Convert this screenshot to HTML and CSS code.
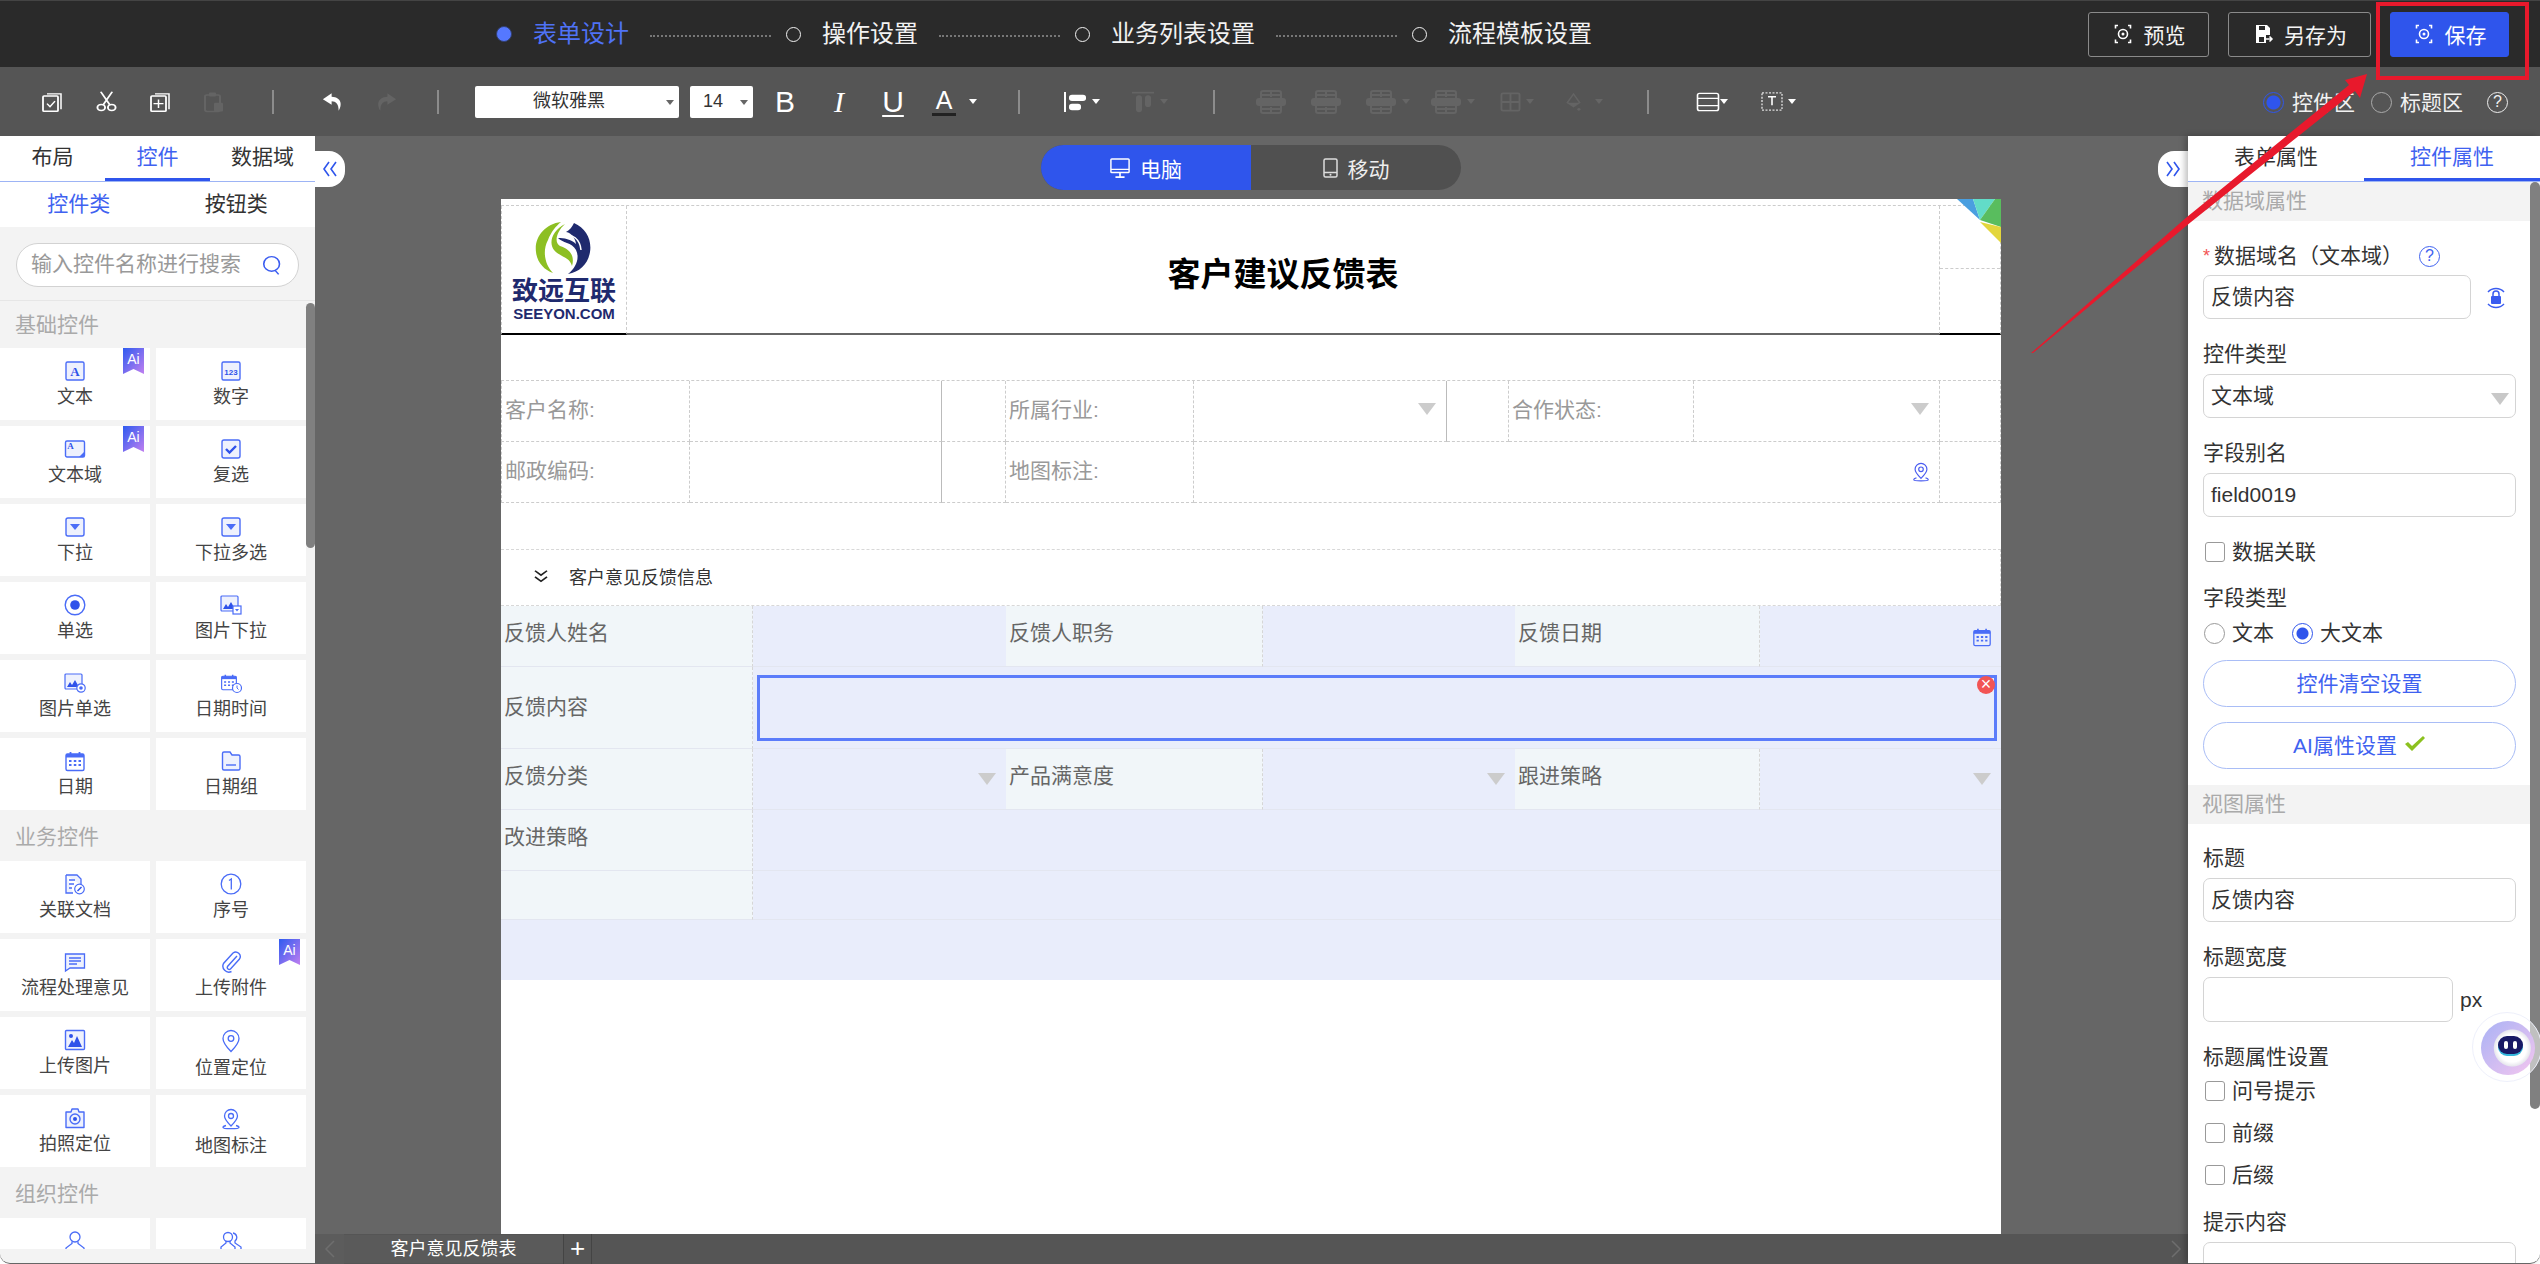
FILE: index.html
```html
<!DOCTYPE html>
<html lang="zh-CN">
<head>
    <meta charset="UTF-8">
    <title>表单设计</title>
    <link rel="stylesheet" href="styles.css">
</head>
<body>
<svg class="defs" width="0" height="0">
    <symbol id="i-pin" viewBox="0 0 22 22"><path d="M11 1.5a6.5 6.5 0 0 0-6.5 6.5c0 3.5 3.5 7 6.5 10 3-3 6.500-6.500 6.500-10A6.500 6.500 0 0 0 11 1.500z" fill="none" stroke="currentColor" stroke-width="1.300"/><circle cx="11" cy="8" r="2.500" fill="none" stroke="currentColor" stroke-width="1.300"/><path d="M6 17.500c-2 .5-3 1-3 2 0 .8 3 1.200 8 1.200s8-.4 8-1.200c0-1-1-1.500-3-2" fill="none" stroke="currentColor" stroke-width="1.300"/></symbol>
    <symbol id="i-cal" viewBox="0 0 22 22"><rect x="2" y="4" width="18" height="16.500" rx="1.500" fill="none" stroke="currentColor" stroke-width="1.400"/><path d="M2 4h18v3.500H2z" fill="currentColor"/><path d="M6.500 2v4M15.500 2v4" stroke="currentColor" stroke-width="1.800"/><path d="M5 10h2.500v2H5zM9.800 10h2.500v2H9.800zM14.500 10h2.500v2h-2.500zM5 14h2.500v2H5zM9.800 14h2.500v2H9.800zM14.500 14h2.500v2h-2.500z" fill="currentColor"/></symbol>
    <symbol id="i-drop" viewBox="0 0 22 22"><rect x="2" y="2" width="18" height="18" rx="2" fill="#eef1fd" stroke="currentColor" stroke-width="1.400"/><path d="M6 8h10l-5 6z" fill="currentColor"/></symbol>
    <symbol id="i-frame" viewBox="0 0 22 22"><path d="M6 2.500H3.500v3M16 2.500h2.500v3M6 19.500H3.500v-3M16 19.500h2.500v-3" fill="none" stroke="currentColor" stroke-width="1.600"/><circle cx="11" cy="11" r="4.500" fill="none" stroke="currentColor" stroke-width="1.600"/><circle cx="11" cy="11" r="1.500" fill="currentColor"/></symbol>
    <symbol id="i-ai" viewBox="0 0 21 26"><defs><linearGradient id="ai-fill" x1="0" y1="0" x2="1" y2="1"><stop offset="0" stop-color="#2e5bf0"/><stop offset="1" stop-color="#c07ff0"/></linearGradient></defs><path d="M0 0h21v26l-10.500-5L0 26z" fill="url(#ai-fill)"/></symbol>
    <symbol id="i-table" viewBox="0 0 32 24" preserveAspectRatio="none"><rect x="6" y="1" width="20" height="22" rx="2" fill="none" stroke="currentColor" stroke-width="2"/><rect x="1" y="8" width="30" height="8" rx="3" fill="currentColor"/><path d="M6 5h20M6 19h20M16 1v6M16 17v6" stroke="currentColor" stroke-width="2"/></symbol>
</svg>

<div class="app">
    <header class="topbar">
        <div class="steps">
            <span class="step-dot"></span><span class="step-name active">表单设计</span>
            <span class="step-line"></span>
            <span class="step-ring"></span><span class="step-name">操作设置</span>
            <span class="step-line"></span>
            <span class="step-ring"></span><span class="step-name">业务列表设置</span>
            <span class="step-line"></span>
            <span class="step-ring"></span><span class="step-name">流程模板设置</span>
        </div>
        <div class="actions">
            <button class="top-btn btn-preview"><svg class="top-icon"><use href="#i-frame"/></svg>预览</button>
            <button class="top-btn btn-saveas"><svg class="top-icon" viewBox="0 0 22 22"><path d="M4 2h11l3 3v7h-4v8H4z" fill="#fff"/><path d="M7 3h6v4H7z" fill="#2a2a2a"/><path d="M7 14h5v5H7z" fill="#2a2a2a"/><path d="M14 16h6M17.500 13.500 20 16l-2.500 2.500" fill="none" stroke="#fff" stroke-width="1.500"/></svg>另存为</button>
            <button class="top-btn btn-save"><svg class="top-icon"><use href="#i-frame"/></svg>保存</button>
        </div>
    </header>

    <div class="toolbar">
        <span class="tool"><svg width="22" height="22" viewBox="0 0 22 26" preserveAspectRatio="none"><path d="M6 3.500h14v18" fill="none" stroke="#fff" stroke-width="1.500"/><rect x="2" y="6" width="15" height="18" rx="1" fill="none" stroke="#fff" stroke-width="1.800"/><path d="M6 15l3 3.500 5-6.500" fill="none" stroke="#fff" stroke-width="1.500"/></svg></span>
        <span class="tool"><svg width="21" height="21" viewBox="0 0 22 28" preserveAspectRatio="none"><circle cx="5.500" cy="22" r="4" fill="none" stroke="#fff" stroke-width="2"/><circle cx="16.500" cy="22" r="4" fill="none" stroke="#fff" stroke-width="2"/><path d="M7.500 18.500 17 1M14.500 18.500 5 1" stroke="#fff" stroke-width="2"/></svg></span>
        <span class="tool"><svg width="22" height="22" viewBox="0 0 22 26" preserveAspectRatio="none"><path d="M6 3.500h14v18" fill="none" stroke="#fff" stroke-width="1.500"/><rect x="2" y="6" width="15" height="18" rx="1" fill="none" stroke="#fff" stroke-width="1.800"/><path d="M9.500 10v10M4.500 15h10" stroke="#fff" stroke-width="1.500"/></svg></span>
        <span class="tool off"><svg width="22" height="22" viewBox="0 0 22 28" preserveAspectRatio="none"><rect x="2" y="5" width="15" height="21" rx="2" fill="none" stroke="currentColor" stroke-width="2"/><rect x="6" y="2" width="7" height="5" rx="1" fill="currentColor"/><rect x="11" y="15" width="9" height="11" rx="1" fill="currentColor"/></svg></span>
        <span class="sep"></span>
        <span class="tool"><svg width="21" height="20" viewBox="0 0 24 30" preserveAspectRatio="none"><path d="M11 2 1 11l10 8v-5c5 0 8 4 8 14 4-8 4-20-8-21z" fill="#fff"/></svg></span>
        <span class="tool off"><svg width="21" height="20" viewBox="0 0 24 30" preserveAspectRatio="none"><path d="M13 2l10 9-10 8v-5c-5 0-8 4-8 14-4-8-4-20 8-21z" fill="currentColor"/></svg></span>
        <span class="sep"></span>
        <span class="select font-select">微软雅黑<i class="mini-caret dark"></i></span>
        <span class="select size-select">14<i class="mini-caret dark"></i></span>
        <span class="tool glyph">B</span>
        <span class="tool glyph ital-i">I</span>
        <span class="tool glyph under-u">U</span>
        <span class="caret-tool wide"><span class="color-a">A</span><i class="mini-caret"></i></span>
        <span class="sep"></span>
        <span class="caret-tool"><svg width="24" height="22" viewBox="0 0 24 24" preserveAspectRatio="none"><path d="M2 1v22" stroke="#fff" stroke-width="2"/><rect x="6" y="4" width="17" height="7" rx="3" fill="#fff"/><rect x="6" y="14" width="12" height="7" rx="3" fill="#fff"/></svg><i class="mini-caret"></i></span>
        <span class="caret-tool off"><svg width="24" height="22" viewBox="0 0 24 26" preserveAspectRatio="none"><path d="M1 2h22" stroke="currentColor" stroke-width="2"/><rect x="5" y="5" width="6" height="20" rx="3" fill="currentColor"/><rect x="14" y="5" width="6" height="14" rx="3" fill="currentColor"/></svg><i class="mini-caret"></i></span>
        <span class="sep"></span>
        <span class="tool off"><svg width="32" height="24"><use href="#i-table"/></svg></span>
        <span class="tool off"><svg width="32" height="24"><use href="#i-table"/></svg></span>
        <span class="caret-tool off"><svg width="32" height="24"><use href="#i-table"/></svg><i class="mini-caret"></i></span>
        <span class="caret-tool off"><svg width="32" height="24"><use href="#i-table"/></svg><i class="mini-caret"></i></span>
        <span class="caret-tool off"><svg width="21" height="20" viewBox="0 0 22 22" preserveAspectRatio="none"><rect x="1.500" y="1.500" width="19" height="19" rx="1.500" fill="none" stroke="currentColor" stroke-width="2"/><path d="M1.500 11h19M11 1.500v19" stroke="currentColor" stroke-width="2"/></svg><i class="mini-caret"></i></span>
        <span class="caret-tool wide off"><svg width="17" height="20" viewBox="0 0 22 30" preserveAspectRatio="none"><path d="M11 3 3 16l8 6 8-6z" fill="none" stroke="currentColor" stroke-width="2"/><path d="M3 16h16l-8 6z" fill="currentColor"/><circle cx="18" cy="26" r="2" fill="currentColor"/></svg><i class="mini-caret"></i></span>
        <span class="sep"></span>
        <span class="caret-tool tight"><svg width="24" height="20" viewBox="0 0 24 22" preserveAspectRatio="none"><rect x="1.500" y="1.500" width="21" height="19" rx="2" fill="none" stroke="#fff" stroke-width="1.600"/><path d="M1.500 7h21M1.500 15h21" stroke="#fff" stroke-width="1.600"/></svg><i class="mini-caret"></i></span>
        <span class="caret-tool"><svg width="22" height="19" viewBox="0 0 22 20" preserveAspectRatio="none"><rect x="1" y="1" width="20" height="18" fill="none" stroke="#ddd" stroke-width="1.400" stroke-dasharray="2 1.500"/><path d="M7 5h8M11 5v9" stroke="#fff" stroke-width="1.600"/></svg><i class="mini-caret"></i></span>
        <div class="zone-switch">
            <span class="zone-radio on"></span><span class="zone-name">控件区</span>
            <span class="zone-radio"></span><span class="zone-name">标题区</span>
            <span class="zone-help">?</span>
        </div>
    </div>

    <div class="main">
        <aside class="left-panel">
            <div class="tabs tabs-three">
                <span class="tab">布局</span>
                <span class="tab current">控件</span>
                <span class="tab">数据域</span>
            </div>
            <div class="subtabs">
                <span class="subtab current">控件类</span>
                <span class="subtab">按钮类</span>
            </div>
            <div class="search-wrap">
                <div class="search-box">
                    <span class="search-hint">输入控件名称进行搜索</span>
                    <svg width="21" height="21" viewBox="0 0 24 26" preserveAspectRatio="none"><circle cx="11" cy="11" r="9" fill="none" stroke="#3a5cf0" stroke-width="1.800"/><path d="M15 19l4 5" stroke="#3a5cf0" stroke-width="1.800"/></svg>
                </div>
            </div>
            <div class="control-list">
                <div class="group-title first">基础控件</div>
                <div class="control-grid">
                    <div class="control"><svg width="22" height="22" viewBox="0 0 22 22"><rect x="2" y="2" width="18" height="18" rx="1.500" fill="#eef1fd" stroke="currentColor" stroke-width="1.400"/><text x="11" y="16" class="svg-a">A</text></svg><span>文本</span><svg class="ai-tag"><use href="#i-ai"/></svg><b class="ai-text">Ai</b></div>
                    <div class="control"><svg width="22" height="22" viewBox="0 0 22 22"><rect x="2" y="2" width="18" height="18" rx="1.500" fill="#eef1fd" stroke="currentColor" stroke-width="1.400"/><text x="11" y="14.500" class="svg-num">123</text></svg><span>数字</span></div>
                    <div class="control"><svg width="22" height="22" viewBox="0 0 22 22"><rect x="1.500" y="3" width="19" height="16" rx="1.500" fill="#eef1fd" stroke="currentColor" stroke-width="1.400"/><text x="6.500" y="11" class="svg-a small">A</text><path d="M20 14v5h-5z" fill="currentColor"/></svg><span>文本域</span><svg class="ai-tag"><use href="#i-ai"/></svg><b class="ai-text">Ai</b></div>
                    <div class="control"><svg width="22" height="22" viewBox="0 0 22 22"><rect x="2" y="2" width="18" height="18" rx="2" fill="#eef1fd" stroke="currentColor" stroke-width="1.400"/><path d="M6 11l3.500 3.500L16 8" fill="none" stroke="#2f52ea" stroke-width="2.400"/></svg><span>复选</span></div>
                    <div class="control"><svg width="22" height="22"><use href="#i-drop"/></svg><span>下拉</span></div>
                    <div class="control"><svg width="22" height="22"><use href="#i-drop"/></svg><span>下拉多选</span></div>
                    <div class="control"><svg width="22" height="22" viewBox="0 0 22 22"><circle cx="11" cy="11" r="9.800" fill="none" stroke="currentColor" stroke-width="1.400"/><circle cx="11" cy="11" r="4.800" fill="#2f52ea"/></svg><span>单选</span></div>
                    <div class="control"><svg width="22" height="22" viewBox="0 0 22 22"><rect x="1" y="2" width="17" height="15" rx="1" fill="#eef1fd" stroke="currentColor" stroke-width="1.200"/><path d="M3 15l3-5 2 3 3-5 4 7z" fill="#2f52ea"/><rect x="13" y="12" width="8" height="8" fill="#fff" stroke="currentColor" stroke-width="1.200"/><path d="M15 15h4l-2 2.500z" fill="currentColor"/></svg><span>图片下拉</span></div>
                    <div class="control"><svg width="22" height="22" viewBox="0 0 22 22"><rect x="1" y="2" width="17" height="15" rx="1" fill="#eef1fd" stroke="currentColor" stroke-width="1.200"/><path d="M3 15l3-5 2 3 3-5 4 7z" fill="#2f52ea"/><circle cx="17" cy="16" r="4.200" fill="#fff" stroke="currentColor" stroke-width="1.200"/><circle cx="17" cy="16" r="1.800" fill="currentColor"/></svg><span>图片单选</span></div>
                    <div class="control"><svg width="22" height="22" viewBox="0 0 22 22"><use href="#i-cal" width="18" height="20" x="0" y="0"/><circle cx="17" cy="16" r="4.500" fill="#fff" stroke="currentColor" stroke-width="1.200"/><path d="M17 13.500V16l1.500 1.500" fill="none" stroke="currentColor"/></svg><span>日期时间</span></div>
                    <div class="control"><svg width="22" height="22"><use href="#i-cal"/></svg><span>日期</span></div>
                    <div class="control"><svg width="22" height="22" viewBox="0 0 22 22"><path d="M2.500 3.500a1.500 1.500 0 0 1 1.500-1.500h6l2 3h6.500a1.500 1.500 0 0 1 1.500 1.500v12a1.500 1.500 0 0 1-1.500 1.500H4a1.500 1.500 0 0 1-1.500-1.500z" fill="#eef1fd" stroke="currentColor" stroke-width="1.400"/><path d="M6 15h10" stroke="currentColor" stroke-width="1.400"/></svg><span>日期组</span></div>
                </div>
                <div class="group-title">业务控件</div>
                <div class="control-grid">
                    <div class="control"><svg width="22" height="22" viewBox="0 0 22 22"><path d="M2 2h11l4 4v6M9 20H2V2" fill="#eef1fd" stroke="currentColor" stroke-width="1.300"/><path d="M5 7h6M5 11h5M5 15h3" stroke="currentColor" stroke-width="1.300"/><circle cx="15.500" cy="16" r="4.800" fill="#fff" stroke="currentColor" stroke-width="1.200"/><path d="M13.500 18l4-4" stroke="#2f52ea" stroke-width="1.500"/></svg><span>关联文档</span></div>
                    <div class="control"><svg width="22" height="22" viewBox="0 0 22 22"><circle cx="11" cy="11" r="9.800" fill="none" stroke="currentColor" stroke-width="1.300"/><path d="M9 7.500l2.300-1.500v10.500" fill="none" stroke="currentColor" stroke-width="1.300"/></svg><span>序号</span></div>
                    <div class="control"><svg width="22" height="22" viewBox="0 0 22 22"><path d="M1.500 3h19v14H6l-4.500 3z" fill="#eef1fd" stroke="currentColor" stroke-width="1.300"/><path d="M5 7h12M5 10h12M5 13h8" stroke="currentColor" stroke-width="1.300"/></svg><span>流程处理意见</span></div>
                    <div class="control"><svg width="22" height="22" viewBox="0 0 22 22"><path d="M17 5l-9.500 10.500a2 2 0 0 0 3 2.500L19.500 8a4.500 4.500 0 0 0-6.500-6L3.500 12.500a6 6 0 0 0 8 8" fill="none" stroke="currentColor" stroke-width="1.400"/></svg><span>上传附件</span><svg class="ai-tag"><use href="#i-ai"/></svg><b class="ai-text">Ai</b></div>
                    <div class="control"><svg width="22" height="22" viewBox="0 0 22 22"><rect x="1.500" y="1.500" width="19" height="19" rx="1" fill="#eef1fd" stroke="currentColor" stroke-width="1.400"/><circle cx="7" cy="7" r="2" fill="#2f52ea"/><path d="M4 18l4-7 2 3 3-7 5 11z" fill="#2f52ea"/></svg><span>上传图片</span></div>
                    <div class="control"><svg width="22" height="24" viewBox="0 0 22 24"><path d="M11 1.500a8 8 0 0 0-8 8c0 4 4 9 8 13 4-4 8-9 8-13a8 8 0 0 0-8-8z" fill="none" stroke="currentColor" stroke-width="1.300"/><circle cx="11" cy="9.500" r="2.800" fill="none" stroke="currentColor" stroke-width="1.300"/></svg><span>位置定位</span></div>
                    <div class="control"><svg width="22" height="22" viewBox="0 0 22 22"><path d="M2 5h5l1-3h6l1 3h5v15.500H2z" fill="#eef1fd" stroke="currentColor" stroke-width="1.400" stroke-linejoin="round"/><circle cx="11" cy="12" r="5" fill="none" stroke="currentColor" stroke-width="1.400"/><circle cx="11" cy="12" r="2" fill="#2f52ea"/></svg><span>拍照定位</span></div>
                    <div class="control"><svg width="22" height="24"><use href="#i-pin"/></svg><span>地图标注</span></div>
                </div>
                <div class="group-title">组织控件</div>
                <div class="control-grid">
                    <div class="control"><svg width="22" height="22" viewBox="0 0 22 22"><circle cx="11" cy="7" r="5" fill="none" stroke="currentColor" stroke-width="1.300"/><path d="M8 11.500v2L2 18v3h18v-3l-6-4.500v-2" fill="none" stroke="currentColor" stroke-width="1.300"/></svg></div>
                    <div class="control"><svg width="22" height="22" viewBox="0 0 22 22"><circle cx="8" cy="7" r="4.500" fill="none" stroke="currentColor" stroke-width="1.300"/><path d="M6 11v2l-5 4v4h14v-4l-5-4v-2M13 3a4.500 4.500 0 0 1 2 8v2l6 4v4h-4" fill="none" stroke="currentColor" stroke-width="1.300"/></svg></div>
                </div>
            </div>
            <div class="panel-foot"></div>
            <span class="scroll-thumb left-thumb"></span>
        </aside>

        <section class="canvas">
            <div class="device-switch">
                <span class="device current"><svg width="20" height="20" viewBox="0 0 22 22"><rect x="1" y="1" width="20" height="15" rx="1" fill="none" stroke="#fff" stroke-width="1.600"/><path d="M1 12.500h20" stroke="#fff" stroke-width="1.600"/><path d="M11 16v5M6 21h10" stroke="#fff" stroke-width="1.800"/></svg>电脑</span>
                <span class="device"><svg width="15" height="20" viewBox="0 0 15 20"><rect x="1" y="1" width="13" height="18" rx="1.500" fill="none" stroke="#ddd" stroke-width="1.500"/><path d="M1 14.500h13" stroke="#ddd" stroke-width="1.500"/><circle cx="7.500" cy="16.800" r="1" fill="#ddd"/></svg>移动</span>
            </div>
            <div class="sheet-area">
                <div class="sheet">
                    <svg class="sheet-corner" width="44" height="44" viewBox="0 0 44 44"><path d="M0 0h16l7 21z" fill="#4a9fe0"/><path d="M16 0h22L23 21z" fill="#62dcc8"/><path d="M38 0h6v28l-21-7z" fill="#59bd5e"/><path d="M23 23l21 5v16z" fill="#e3d63c"/></svg>
                    <div class="sheet-head">
                        <div class="logo-cell">
                            <svg width="60" height="56" viewBox="0 0 60 56"><path d="M27 2C11 4 0 17 2 32c1 10 8 18 17 21C11 45 8 31 14 20 17 12 22 6 27 2z" fill="#8dbf23"/><path d="M31 4C19 10 14 22 20 30c6 7 16 7 18 16 3-10-2-17-12-20-6-3-4-14 5-22z" fill="#8dbf23"/><path d="M40 3c12 5 18 17 16 29-2 12-10 20-22 22 8-6 12-16 8-24-4-8-14-7-18-12 6 0 13 1 18 6-1-8-7-12-10-12 4-2 6-5 8-9z" fill="#1f2a6e"/><path d="M30 16c8-3 16 3 17 14" fill="none" stroke="#fff" stroke-width="1.500"/></svg>
                            <span class="logo-cn">致远互联</span>
                            <span class="logo-en">SEEYON.COM</span>
                        </div>
                        <div class="title-cell">客户建议反馈表</div>
                        <div class="head-side">
                            <span></span>
                            <span></span>
                        </div>
                    </div>

                    <div class="meta-grid">
                        <div class="meta-cell label">客户名称:</div>
                        <div class="meta-cell solid-right"></div>
                        <div class="meta-cell"></div>
                        <div class="meta-cell label">所属行业:</div>
                        <div class="meta-cell solid-right"><i class="tri"></i></div>
                        <div class="meta-cell"></div>
                        <div class="meta-cell label">合作状态:</div>
                        <div class="meta-cell"><i class="tri"></i></div>
                        <div class="meta-cell"></div>

                        <div class="meta-cell label">邮政编码:</div>
                        <div class="meta-cell solid-right"></div>
                        <div class="meta-cell"></div>
                        <div class="meta-cell label">地图标注:</div>
                        <div class="meta-cell span-map"><svg class="map-icon" width="20" height="20"><use href="#i-pin"/></svg></div>
                        <div class="meta-cell"></div>
                    </div>

                    <div class="group-head">
                        <svg width="16" height="14" viewBox="0 0 16 16" preserveAspectRatio="none"><path d="M2 2l6 5 6-5M2 9l6 5 6-5" fill="none" stroke="#222" stroke-width="1.800"/></svg>
                        <span>客户意见反馈信息</span>
                    </div>

                    <div class="data-grid">
                        <div class="data-cell name">反馈人姓名</div>
                        <div class="data-cell"></div>
                        <div class="data-cell name">反馈人职务</div>
                        <div class="data-cell"></div>
                        <div class="data-cell name">反馈日期</div>
                        <div class="data-cell"><svg class="cal-icon" width="20" height="20"><use href="#i-cal"/></svg></div>

                        <div class="data-cell name tall">反馈内容</div>
                        <div class="data-cell span-five">
                            <div class="picked"><span class="picked-close">×</span></div>
                        </div>

                        <div class="data-cell name">反馈分类</div>
                        <div class="data-cell"><i class="tri"></i></div>
                        <div class="data-cell name">产品满意度</div>
                        <div class="data-cell"><i class="tri"></i></div>
                        <div class="data-cell name">跟进策略</div>
                        <div class="data-cell"><i class="tri"></i></div>

                        <div class="data-cell name">改进策略</div>
                        <div class="data-cell span-five"></div>

                        <div class="data-cell name"></div>
                        <div class="data-cell span-five"></div>

                        <div class="data-cell span-all"></div>
                    </div>
                </div>
            </div>
            <div class="sheet-tabs">
                <span class="sheet-prev"><svg width="12" height="20" viewBox="0 0 12 20"><path d="M10 2 2 10l8 8" fill="none" stroke="#6e6e6e" stroke-width="1.500"/></svg></span>
                <span class="sheet-tab">客户意见反馈表</span>
                <span class="sheet-add">+</span>
                <span class="sheet-next"><svg width="12" height="20" viewBox="0 0 12 20"><path d="M2 2l8 8-8 8" fill="none" stroke="#6e6e6e" stroke-width="1.500"/></svg></span>
            </div>
            <span class="collapse left-collapse"><svg width="16" height="16" viewBox="0 0 16 16"><path d="M7 1 2 8l5 7M14 1 9 8l5 7" fill="none" stroke="#2f55ec" stroke-width="1.600"/></svg></span>
            <span class="collapse right-collapse"><svg width="16" height="16" viewBox="0 0 16 16"><path d="M2 1l5 7-5 7M9 1l5 7-5 7" fill="none" stroke="#2f55ec" stroke-width="1.600"/></svg></span>
        </section>

        <aside class="right-panel">
            <div class="tabs tabs-two">
                <span class="tab">表单属性</span>
                <span class="tab current">控件属性</span>
            </div>
            <div class="prop-section">数据域属性</div>
            <div class="prop-body">
                <div class="prop-label"><em>*</em>数据域名（文本域）<span class="help-ring">?</span></div>
                <div class="prop-inline">
                    <div class="prop-input name-input">反馈内容</div>
                    <svg width="24" height="24" viewBox="0 0 24 24"><path d="M4 6a11 11 0 0 1 16 0M20 18a11 11 0 0 1-16 0" fill="none" stroke="#3a5cf0" stroke-width="1.500"/><rect x="7" y="10" width="10" height="8" rx="1" fill="#3a5cf0"/><path d="M9 10V8a3 3 0 0 1 6 0v2" fill="none" stroke="#3a5cf0" stroke-width="1.500"/></svg>
                </div>
                <div class="prop-label">控件类型</div>
                <div class="prop-input">文本域<i class="tri"></i></div>
                <div class="prop-label">字段别名</div>
                <div class="prop-input">field0019</div>
                <label class="prop-check check-first"><span class="box"></span>数据关联</label>
                <div class="prop-label">字段类型</div>
                <div class="radio-row">
                    <span class="radio"></span><span class="radio-text">文本</span>
                    <span class="radio on"></span><span class="radio-text">大文本</span>
                </div>
                <div class="pill">控件清空设置</div>
                <div class="pill">AI属性设置<svg width="22" height="18" viewBox="0 0 22 18"><path d="M1 9l3-2 4 4L19 1l2 2L8 16z" fill="#8cc11f"/></svg></div>
            </div>
            <div class="prop-section lower">视图属性</div>
            <div class="prop-body">
                <div class="prop-label">标题</div>
                <div class="prop-input">反馈内容</div>
                <div class="prop-label">标题宽度</div>
                <div class="prop-inline">
                    <div class="prop-input width-input"></div>
                    <span class="unit">px</span>
                </div>
                <div class="prop-label">标题属性设置</div>
                <label class="prop-check check-tight"><span class="box"></span>问号提示</label>
                <label class="prop-check"><span class="box"></span>前缀</label>
                <label class="prop-check"><span class="box"></span>后缀</label>
                <div class="prop-label">提示内容</div>
                <div class="prop-input"></div>
            </div>
            <span class="scroll-thumb right-thumb"></span>
        </aside>
    </div>

    <div class="helper-bot">
        <span class="bot-face"><i></i><i></i></span>
    </div>

    <div class="mark-box"></div>
    <svg class="mark-arrow" width="2540" height="1264" viewBox="0 0 2540 1264"><path d="M2031 353 2187 217 2349 85 2345 80 2367 74 2360 98 2355 91 2191 222 2033 353z" fill="#e8192c"/></svg>
</div>
</body>
</html>
```

FILE: styles.css
```css
* {
    box-sizing: border-box;
}

html, body {
    margin: 0;
    padding: 0;
    height: 100%;
    overflow: hidden;
}

body {
    font-family: "Liberation Sans", "Noto Sans CJK SC", sans-serif;
    font-size: 21px;
    color: #333;
}

.defs {
    position: absolute;
}

i, em {
    font-style: normal;
}

.app {
    position: relative;
    width: 2540px;
    height: 1264px;
    display: flex;
    flex-direction: column;
    color: #3f62f0;
}

/* top bar */
.topbar {
    height: 67px;
    flex: none;
    background-color: #2a2a2a;
    border-top: 1px solid #444;
    display: flex;
    align-items: center;
    justify-content: space-between;
}

.steps {
    display: flex;
    align-items: center;
    padding-left: 496px;
    color: #fff;
    font-size: 24px;
}

.step-dot {
    width: 16px;
    height: 16px;
    border-radius: 50%;
    background-color: #5578ff;
    border: 1px solid #33406f;
    margin-right: 21px;
}

.step-name {
    line-height: 30px;
    color: #f2f2f2;
}

.step-name.active {
    color: #4f72f5;
}

.step-line {
    width: 121px;
    border-top: 2px dotted #777;
    margin: 4px 15px 0 21px;
}

.step-ring {
    width: 15px;
    height: 15px;
    border: 1.5px solid #f2f2f2;
    border-radius: 50%;
    margin-right: 21px;
}

.actions {
    display: flex;
    gap: 19px;
    padding-right: 31px;
}

.top-btn {
    height: 45px;
    display: flex;
    align-items: center;
    justify-content: center;
    gap: 10px;
    font: inherit;
    font-size: 21px;
    color: #f4f4f4;
    background: none;
    border: 1px solid #8a8a8a;
    border-radius: 3px;
    padding: 0;
}

.btn-preview { width: 121px; }
.btn-saveas { width: 143px; }
.btn-save {
    width: 119px;
    background-color: #2f55ec;
    border-color: #2f55ec;
    color: #fff;
}

.top-icon {
    width: 22px;
    height: 22px;
    color: #fff;
}

/* toolbar */
.toolbar {
    height: 69px;
    flex: none;
    background-color: #555;
    padding-left: 25px;
    display: grid;
    grid-template-columns: 54px 54px 54px 54px 64px 54px 54px 50px 216px 79px 54px 54px 54px 69px 60px 65px 71px 58px 56px 53px 70px 61px 68px 65px 64px 64px 69px 1fr;
    align-items: center;
    justify-items: center;
    color: #fff;
}

.tool, .caret-tool {
    display: flex;
    align-items: center;
    justify-content: center;
}

.caret-tool { gap: 5px; }
.caret-tool.wide { gap: 13px; }
.caret-tool.tight { gap: 0; }

.off { color: #646464; }
.off .mini-caret { border-top-color: #666; }

.sep {
    width: 2px;
    height: 24px;
    background-color: #8c8c8c;
}

.select {
    height: 32px;
    background-color: #fff;
    border-radius: 2px;
    color: #333;
    font-size: 18px;
    line-height: 30px;
    position: relative;
}

.font-select {
    width: 204px;
    justify-self: end;
    text-align: center;
    padding-right: 16px;
}

.size-select {
    width: 63px;
    justify-self: start;
    margin-left: 11px;
    padding-left: 13px;
}

.select .mini-caret {
    position: absolute;
    right: 5px;
    top: 14px;
}

.mini-caret {
    width: 0;
    height: 0;
    border-left: 4px solid transparent;
    border-right: 4px solid transparent;
    border-top: 5px solid #fff;
}

.mini-caret.dark { border-top-color: #666; }

.glyph {
    font-size: 30px;
    line-height: 34px;
    color: #fff;
}

.ital-i { font-style: italic; font-family: "Liberation Serif", serif; }
.under-u { text-decoration: underline; text-underline-offset: 3px; text-decoration-thickness: 2px; }

.color-a {
    font-size: 25px;
    line-height: 26px;
    color: #fff;
    border-bottom: 3px solid #222;
    width: 24px;
    text-align: center;
}

.zone-switch {
    justify-self: end;
    display: flex;
    align-items: center;
    padding: 2px 32px 0 0;
    color: #f2f2f2;
}

.zone-radio {
    width: 21px;
    height: 21px;
    border: 1.5px solid #aaa;
    border-radius: 50%;
    margin-right: 8px;
}

.zone-radio.on {
    border-color: #2f55ec;
    background: radial-gradient(circle, #2f55ec 0 6.5px, transparent 7.5px);
}

.zone-name {
    width: 63px;
    margin-right: 16px;
    line-height: 26px;
    white-space: nowrap;
}

.zone-name + .zone-radio + .zone-name {
    margin-right: 24px;
}

.zone-help {
    width: 21px;
    height: 21px;
    border: 1.5px solid #eee;
    border-radius: 50%;
    text-align: center;
    font-size: 16px;
    line-height: 18px;
}

/* main area */
.main {
    flex: 1;
    display: flex;
    min-height: 0;
}

.left-panel {
    width: 315px;
    flex: none;
    background-color: #f3f3f3;
    position: relative;
    display: flex;
    flex-direction: column;
    border-bottom-left-radius: 10px;
    overflow: hidden;
    border-bottom: 1px solid #666;
}

.tabs {
    height: 46px;
    flex: none;
    display: grid;
    background-color: #fff;
    border-bottom: 1px solid #9db4f5;
}

.tabs-three { grid-template-columns: repeat(3, 1fr); }
.tabs-two { grid-template-columns: repeat(2, 1fr); }

.tab {
    text-align: center;
    line-height: 42px;
    color: #333;
    white-space: nowrap;
}

.tab.current {
    color: #3f62f0;
    border-bottom: 3px solid #2f55ec;
    height: 45px;
}

.subtabs {
    height: 45px;
    flex: none;
    display: grid;
    grid-template-columns: 1fr 1fr;
    background-color: #fff;
}

.subtab {
    text-align: center;
    line-height: 44px;
    color: #333;
}

.subtab.current { color: #3f62f0; }

.search-wrap {
    height: 74px;
    flex: none;
    padding: 16px 16px 0;
    border-bottom: 1px solid #e6e6e6;
}

.search-box {
    height: 44px;
    background-color: #fff;
    border: 1px solid #d2d2d2;
    border-radius: 22px;
    display: flex;
    align-items: center;
    justify-content: space-between;
    padding: 0 15px 0 14px;
}

.search-hint {
    color: #999;
    line-height: 38px;
    padding-bottom: 2px;
    white-space: nowrap;
}

.control-list {
    flex: 1;
    min-height: 0;
    overflow: hidden;
    padding-right: 9px;
}

.panel-foot {
    height: 14px;
    flex: none;
}

.group-title {
    height: 51px;
    line-height: 53px;
    padding-left: 15px;
    color: #aaa;
}

.group-title.first {
    height: 47px;
    line-height: 48px;
}

.control-grid {
    display: grid;
    grid-template-columns: 150px 150px;
    grid-auto-rows: 72px;
    gap: 6px;
}

.control {
    position: relative;
    background-color: #fff;
    display: flex;
    flex-direction: column;
    align-items: center;
    padding-top: 12px;
    color: #4a6cf7;
    font-size: 18px;
}

.control > svg:first-child {
    flex: none;
}

.control > span {
    margin-top: 4px;
    line-height: 22px;
    color: #444;
    white-space: nowrap;
}

.ai-tag {
    position: absolute;
    top: 0;
    right: 6px;
    width: 21px;
    height: 26px;
}

.ai-text {
    position: absolute;
    top: 3px;
    right: 7px;
    width: 19px;
    text-align: center;
    color: #fff;
    font-size: 14px;
    font-weight: normal;
    line-height: 16px;
}

.svg-a {
    font-family: "Liberation Serif", serif;
    font-size: 13px;
    font-weight: bold;
    fill: #2f52ea;
    text-anchor: middle;
}

.svg-a.small { font-size: 9px; }

.svg-num {
    font-family: "Liberation Sans", sans-serif;
    font-size: 8px;
    font-weight: bold;
    fill: #2f52ea;
    text-anchor: middle;
}

.scroll-thumb {
    position: absolute;
    background-color: #808080;
    border-radius: 5px;
}

.left-thumb {
    left: 306px;
    top: 167px;
    width: 9px;
    height: 245px;
}

.right-thumb {
    right: 0;
    top: 46px;
    width: 10px;
    height: 927px;
}

/* canvas */
.canvas {
    flex: 1;
    min-width: 0;
    background-color: #666;
    position: relative;
    display: flex;
    flex-direction: column;
}

.device-switch {
    align-self: center;
    flex: none;
    margin: 9px 1px 9px 0;
    width: 420px;
    height: 45px;
    border-radius: 23px;
    overflow: hidden;
    display: grid;
    grid-template-columns: 210px 210px;
    background-color: #505050;
}

.device {
    display: flex;
    align-items: center;
    justify-content: center;
    gap: 10px;
    color: #eee;
    font-size: 21px;
}

.device.current {
    background-color: #2f55ec;
    color: #fff;
}

.sheet-area {
    flex: 1;
    min-height: 0;
    display: flex;
    justify-content: center;
    overflow: hidden;
}

.sheet {
    width: 1500px;
    margin-right: 1px;
    background-color: #fff;
    padding-top: 6px;
    position: relative;
    height: 100%;
}

.sheet-corner {
    position: absolute;
    top: 0;
    right: 0;
}

.sheet-head {
    display: grid;
    grid-template-columns: 126px 1312px 62px;
    height: 130px;
    border-top: 1px dashed #ccc;
}

.logo-cell {
    border-left: 1px dashed #ccc;
    border-right: 1px dashed #ccc;
    border-bottom: 2px solid #000;
    display: flex;
    flex-direction: column;
    align-items: center;
    padding-top: 14px;
}

.logo-cn {
    font-size: 26px;
    line-height: 30px;
    font-weight: bold;
    color: #1f2a6e;
    white-space: nowrap;
}

.logo-en {
    font-size: 15px;
    line-height: 17px;
    margin-top: -1px;
    font-weight: bold;
    color: #1f2a6e;
    white-space: nowrap;
}

.title-cell {
    border-bottom: 2px solid #666;
    display: flex;
    align-items: center;
    justify-content: center;
    padding-top: 4px;
    font-size: 33px;
    font-weight: bold;
    color: #000;
}

.head-side {
    display: grid;
    grid-template-rows: 63px 1fr;
    border-left: 1px dashed #ccc;
    border-right: 1px dashed #ccc;
    border-bottom: 2px solid #000;
}

.head-side span:first-child {
    border-bottom: 1px dashed #ccc;
}

.meta-grid {
    margin-top: 45px;
    display: grid;
    grid-template-columns: 189px 252px 64px 188px 253px 62px 185px 246px 61px;
    grid-auto-rows: 61px;
    border-top: 1px dashed #ccc;
}

.meta-cell {
    position: relative;
    border-bottom: 1px dashed #ccc;
    border-right: 1px dashed #ccc;
    display: flex;
    align-items: center;
}

.meta-cell:first-child,
.meta-cell:nth-child(10) {
    border-left: 1px dashed #ccc;
}

.meta-cell.label {
    color: #999;
    padding-left: 3px;
    padding-bottom: 7px;
}

.solid-right {
    border-right: 1px solid #bbb;
}

.span-map {
    grid-column: span 4;
}

.tri {
    position: absolute;
    right: 10px;
    top: 22px;
    width: 0;
    height: 0;
    border-left: 9px solid transparent;
    border-right: 9px solid transparent;
    border-top: 12px solid #ccc;
}

.map-icon {
    position: absolute;
    right: 8px;
    top: 20px;
    color: #4a5cf0;
}

.group-head {
    margin-top: 46px;
    height: 57px;
    display: flex;
    align-items: center;
    gap: 20px;
    padding: 0 0 4px 32px;
    font-size: 18px;
    color: #333;
    border-top: 1px dashed #d8d8d8;
    border-bottom: 1px dashed #d8d8d8;
    border-right: 1px dashed #d8d8d8;
}

.data-grid {
    display: grid;
    grid-template-columns: 252px 253px 257px 252px 245px 241px;
    grid-template-rows: 61px 82px 61px 61px 49px 60px;
    background-color: #e9edfb;
}

.data-cell {
    position: relative;
    background-color: #e9edfb;
    border-bottom: 1px solid #e3e6f0;
}

.data-cell.name {
    background-color: #f1f6f9;
    border-right: 1px dashed #d6d6d6;
    color: #666;
    padding: 13px 0 0 3px;
    line-height: 28px;
}

.data-cell.name.tall {
    padding-top: 26px;
}

.data-cell .tri {
    right: 10px;
    top: 24px;
}

.cal-icon {
    position: absolute;
    right: 9px;
    top: 21px;
    color: #4a6cf7;
}

.span-five { grid-column: span 5; }
.span-all {
    grid-column: 1 / -1;
    border-bottom: 0;
}

.picked {
    position: relative;
    height: 66px;
    margin: 8px 4px;
    border: 3px solid #5b7cfa;
}

.picked-close {
    position: absolute;
    top: -2px;
    right: -1px;
    width: 18px;
    height: 18px;
    border-radius: 50%;
    background-color: #f25454;
    color: #fff;
    font-size: 18px;
    line-height: 17px;
    text-align: center;
}

.sheet-tabs {
    height: 30px;
    flex: none;
    background-color: #555;
    display: flex;
    align-items: center;
    position: relative;
    color: #fff;
}

.sheet-prev {
    width: 29px;
    height: 100%;
    background-color: #5c5c5c;
    display: flex;
    align-items: center;
    justify-content: center;
}

.sheet-tab {
    width: 219px;
    text-align: center;
    font-size: 18px;
    line-height: 28px;
    background-color: #5a5a5a;
}

.sheet-add {
    width: 29px;
    height: 100%;
    border-left: 1px solid #444;
    border-right: 1px solid #444;
    text-align: center;
    font-size: 26px;
    line-height: 28px;
}

.sheet-next {
    margin-left: auto;
    margin-right: 6px;
    display: flex;
}

.collapse {
    position: absolute;
    top: 15px;
    width: 30px;
    height: 36px;
    background-color: #fff;
    display: flex;
    align-items: center;
    justify-content: center;
}

.left-collapse {
    left: 0;
    border-radius: 0 16px 16px 0;
}

.right-collapse {
    right: 0;
    border-radius: 16px 0 0 16px;
}

/* right panel */
.right-panel {
    width: 352px;
    flex: none;
    background-color: #fff;
    position: relative;
    overflow: hidden;
    border-bottom-right-radius: 10px;
    border-bottom: 1px solid #666;
    box-shadow: -3px 0 6px rgba(0, 0, 0, 0.25);
}

.prop-section {
    height: 39px;
    background-color: #f3f3f3;
    color: #aaa;
    line-height: 38px;
    padding-left: 14px;
}

.prop-section.lower {
    margin-top: 16px;
}

.prop-body {
    padding: 0 24px 0 15px;
    color: #333;
}

.prop-label {
    margin-top: 23px;
    line-height: 24px;
    display: flex;
    align-items: center;
    white-space: nowrap;
}

.lower + .prop-body > .prop-label:first-child,
.prop-check + .prop-label {
    margin-top: 22px;
}

.prop-check + .prop-check + .prop-check + .prop-label {
    margin-top: 23px;
}

.prop-label em {
    color: #f25454;
    margin-right: 4px;
    font-size: 18px;
}

.help-ring {
    width: 21px;
    height: 21px;
    margin-left: 16px;
    border: 1.5px solid #3f62f0;
    border-radius: 50%;
    color: #3f62f0;
    font-size: 16px;
    line-height: 18px;
    text-align: center;
}

.prop-input {
    position: relative;
    margin-top: 8px;
    height: 44px;
    border: 1px solid #d4d4d4;
    border-radius: 7px;
    padding-left: 7px;
    line-height: 42px;
}

.prop-input .tri {
    right: 6px;
    top: 18px;
    border-top-color: #c8c8c8;
}

.prop-inline {
    display: flex;
    align-items: center;
}

.name-input { width: 268px; margin-top: 7px; }
.prop-inline > svg { margin: 8px 0 0 13px; }
.width-input { width: 250px; height: 45px; }

.unit {
    margin: 8px 0 0 7px;
    line-height: 24px;
}

.prop-check {
    margin-top: 18px;
    display: flex;
    align-items: center;
    gap: 7px;
    line-height: 24px;
}

.check-first { margin-top: 23px; }
.check-tight { margin-top: 10px; }

.box {
    width: 20px;
    height: 20px;
    margin-left: 2px;
    border: 1px solid #999;
    border-radius: 3px;
}

.radio-row {
    margin-top: 11px;
    display: flex;
    align-items: center;
    line-height: 24px;
}

.radio {
    width: 21px;
    height: 21px;
    margin-left: 1px;
    border: 1.5px solid #999;
    border-radius: 50%;
}

.radio.on {
    border-color: #2f55ec;
    background: radial-gradient(circle, #2f55ec 0 5.500px, transparent 6.500px);
}

.radio-text {
    margin: 0 17px 0 7px;
}

.pill {
    margin-top: 15px;
    height: 47px;
    padding-bottom: 3px;
    border: 1px solid #a9bdf6;
    border-radius: 24px;
    display: flex;
    align-items: center;
    justify-content: center;
    gap: 7px;
    color: #3f62f0;
}

/* floating helper */
.helper-bot {
    position: absolute;
    left: 2472px;
    top: 1012px;
    width: 70px;
    height: 70px;
    border-radius: 50%;
    background-color: rgba(255, 255, 255, 0.5);
    border: 1px solid #eef0fb;
    display: flex;
    align-items: center;
    justify-content: center;
}

.helper-bot::before {
    content: "";
    position: absolute;
    left: 8px;
    top: 8px;
    width: 54px;
    height: 54px;
    border-radius: 50%;
    background: radial-gradient(circle at 58% 50%, #fff 0 14px, #e8e8ee 18px, transparent 19px), linear-gradient(135deg, #a9b2f5, #f4c6ef);
}

.bot-face {
    position: relative;
    margin: 0 0 4px 6px;
    width: 25px;
    height: 18px;
    border-radius: 9px;
    background-color: #191a66;
    box-shadow: 0 2px 0 #35b7dc;
    display: flex;
    justify-content: center;
    align-items: center;
    gap: 5px;
}

.bot-face i {
    width: 4px;
    height: 8px;
    border-radius: 2px;
    background-color: #fff;
}

/* red markup over the screenshot */
.mark-box {
    position: absolute;
    left: 2376px;
    top: 2px;
    width: 153px;
    height: 78px;
    border: 4px solid #e8192c;
}

.mark-arrow {
    position: absolute;
    left: 0;
    top: 0;
    pointer-events: none;
}
```
